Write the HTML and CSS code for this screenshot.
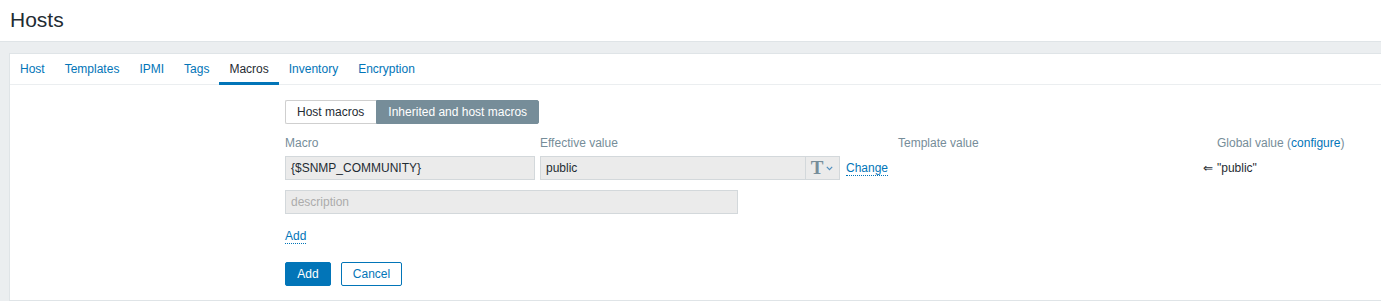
FILE: index.html
```html
<!DOCTYPE html>
<html>
<head>
<meta charset="utf-8">
<title>Hosts</title>
<link rel="stylesheet" href="styles.css">
</head>
<body>
<header class="page-header">
  <h1 class="page-title">Hosts</h1>
</header>
<main class="wrapper">
  <section class="panel">
    <nav class="tabs">
      <a class="tab">Host</a>
      <a class="tab">Templates</a>
      <a class="tab">IPMI</a>
      <a class="tab">Tags</a>
      <a class="tab active">Macros</a>
      <a class="tab">Inventory</a>
      <a class="tab">Encryption</a>
    </nav>
    <div class="tab-body">
      <div class="segmented">
        <span class="seg">Host macros</span>
        <span class="seg seg-on">Inherited and host macros</span>
      </div>

      <div class="macro-grid">
        <div class="th">Macro</div>
        <div class="th">Effective value</div>
        <div class="th">Template value</div>
        <div class="th"></div>
        <div class="th">Global value (<a class="link">configure</a>)</div>

        <div class="input ro">{$SNMP_COMMUNITY}</div>
        <div class="value-cell">
          <div class="value-group">
            <div class="input ro value-input">public</div>
            <div class="type-btn">
              <span class="type-t">T</span>
              <svg class="chev" width="7" height="5" viewBox="0 0 7 5"><path d="M0.8 0.9 L3.5 3.6 L6.2 0.9" fill="none" stroke="#4f8fbf" stroke-width="1.2"/></svg>
            </div>
          </div>
          <a class="dotted">Change</a>
        </div>
        <div class="td"></div>
        <div class="td arrow">&lArr;</div>
        <div class="td">"public"</div>
      </div>

      <div class="input ro desc">description</div>

      <div class="add-row"><a class="dotted">Add</a></div>

      <div class="buttons">
        <button class="btn btn-primary">Add</button>
        <button class="btn btn-alt">Cancel</button>
      </div>
    </div>
  </section>
</main>
</body>
</html>
```
FILE: styles.css
```css
* { box-sizing: border-box; }
html, body { margin: 0; padding: 0; }
body {
  font-family: "Liberation Sans", Arial, sans-serif;
  font-size: 12px;
  color: #1f2c33;
  background: #ebeef0;
  overflow: hidden;
}
a { color: #0275b8; cursor: pointer; }

.page-header {
  background: #fff;
  height: 42px;
  border-bottom: 1px solid #dfe4e7;
  padding: 8px 0 0 10px;
}
.page-title {
  margin: 0;
  font-weight: normal;
  font-size: 21px;
  line-height: 24px;
  color: #1f2c33;
}

.wrapper {
  padding: 11px 0 0 9px;
}
.panel {
  background: #fff;
  border: 1px solid #dfe4e7;
  border-right: none;
  height: 248px;
}

.tabs {
  display: flex;
  height: 31px;
  border-bottom: 1px solid #ebeef0;
}
.tab {
  display: block;
  height: 31px;
  margin-bottom: -1px;
  padding: 2px 10px 0;
  line-height: 26px;
  border-bottom: 3px solid transparent;
  color: #0275b8;
  text-decoration: none;
}
.tab.active {
  color: #1f2c33;
  border-bottom-color: #0275b8;
}

.tab-body {
  padding: 15px 0 0 275px;
}

.segmented {
  display: flex;
  height: 24px;
}
.seg {
  display: block;
  height: 24px;
  line-height: 22px;
  padding: 0 11px;
  border: 1px solid #cfcfcf;
  background: #fff;
  color: #1f2c33;
}
.seg:first-child { border-radius: 2px 0 0 2px; border-right: none; padding: 0 12px 0 11px; }
.seg-on {
  background: #768d99;
  border-color: #768d99;
  color: #fff;
  border-radius: 0 2px 2px 0;
}

.macro-grid {
  display: grid;
  grid-template-columns: 250px 353px 300px 9px auto;
  column-gap: 5px;
  row-gap: 5px;
  margin-top: 11px;
  align-items: center;
}
.th {
  color: #768d99;
  line-height: 16px;
}
.th .link { text-decoration: none; }
.td { line-height: 24px; }
.arrow { font-size: 12px; }

.input {
  height: 24px;
  line-height: 22px;
  padding: 0 5px;
  border: 1px solid #d3d8db;
  background: #ebebeb;
  color: #1f2c33;
  white-space: nowrap;
  overflow: hidden;
}

.value-cell {
  display: flex;
  align-items: center;
  gap: 6px;
}
.value-group {
  display: flex;
  width: 300px;
}
.value-input {
  flex: 1;
  border-right: none;
}
.type-btn {
  width: 35px;
  height: 24px;
  border: 1px solid #d3d8db;
  background: #ebebeb;
  display: flex;
  align-items: center;
  justify-content: center;
  gap: 3px;
  padding-right: 1px;
}
.type-t {
  font-family: "Liberation Serif", "Times New Roman", serif;
  font-size: 19px;
  line-height: 18px;
  color: #768d99;
  font-weight: bold;
}
.chev { display: block; margin-top: 1px; }

.dotted {
  color: #0275b8;
  text-decoration: none;
  border-bottom: 1px dotted #0275b8;
  line-height: 14px;
}

.desc {
  width: 453px;
  margin-top: 10px;
  color: #acacac;
}

.add-row {
  margin-top: 15px;
  height: 14px;
  line-height: 14px;
}

.buttons {
  display: flex;
  gap: 10px;
  margin-top: 19px;
}
.btn {
  font-family: "Liberation Sans", Arial, sans-serif;
  font-size: 12px;
  height: 24px;
  padding: 0 10px;
  border-radius: 2px;
  border: 1px solid #0275b8;
  line-height: 22px;
  cursor: pointer;
}
.btn-primary {
  background: #0275b8;
  color: #fff;
  width: 46px;
}
.btn-alt {
  background: #fff;
  color: #0275b8;
  width: 61px;
}
```
